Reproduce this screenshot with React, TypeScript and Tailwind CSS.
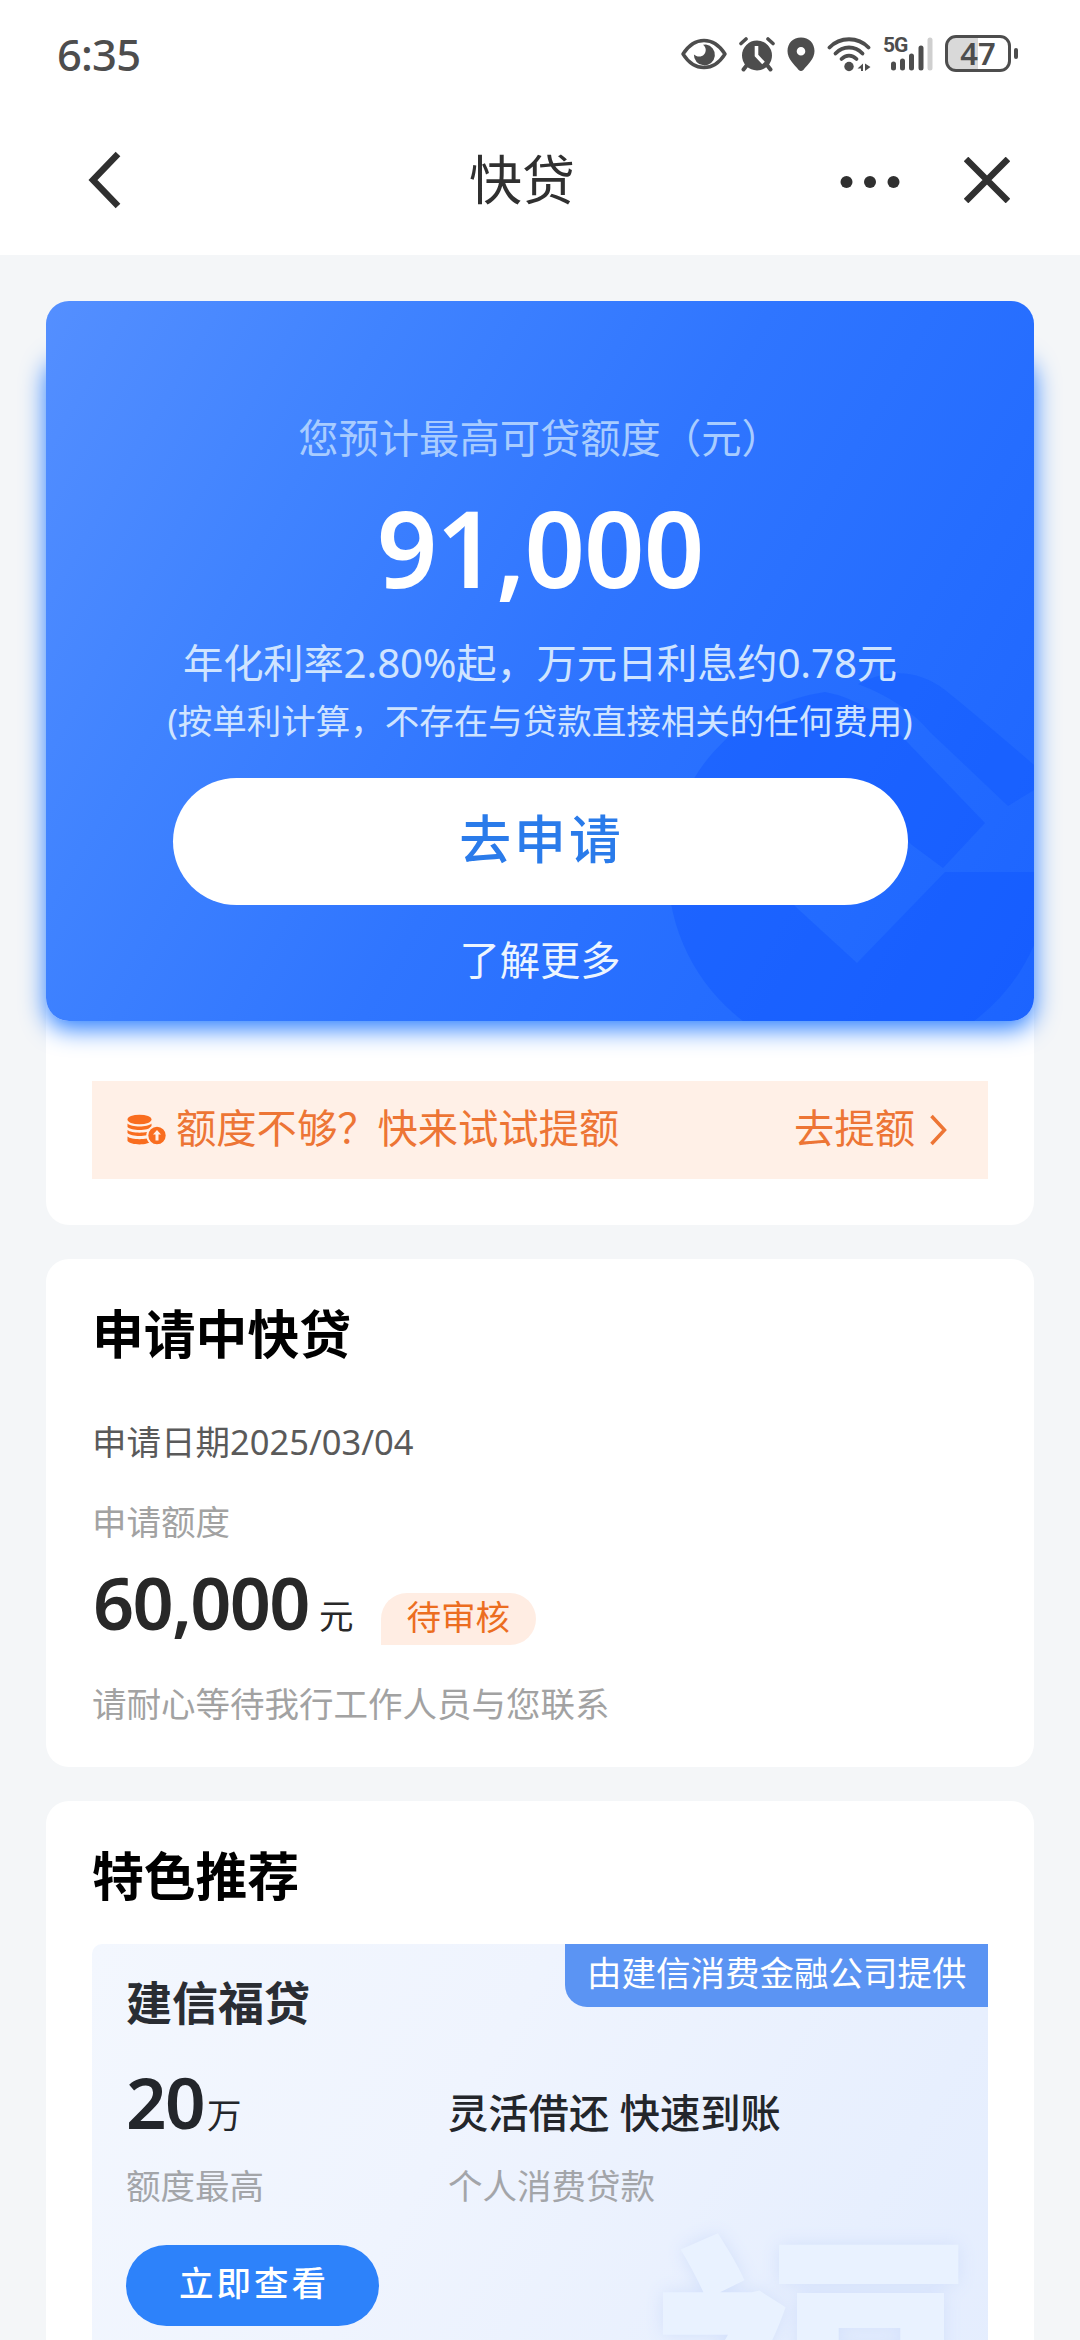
import type { ReactNode } from 'react'

function StatusIcons() {
  return (
    <div className="flex items-center text-[#4d4d4d]">
      {/* Eye comfort */}
      <svg width="46" height="36" viewBox="0 0 46 36" fill="none">
        <path d="M2 18C8 8.500 15 4.500 23 4.500S38 8.500 44 18C38 27.500 31 31.500 23 31.500S8 27.500 2 18Z" stroke="currentColor" strokeWidth="3.400" strokeLinejoin="round" />
        <path d="M25 8.500A10.500 10.500 0 1 1 12.900 18.500C15.500 21 20.500 21.500 23 18.500C25.500 15.500 25.500 11.500 22 8.700Z" fill="currentColor" />
      </svg>
      {/* Alarm */}
      <svg className="ml-3" width="36" height="36" viewBox="0 0 36 36" fill="none">
        <circle cx="18" cy="19.500" r="15" fill="currentColor" />
        <path d="M2 7.500L7 3M34 7.500L29 3" stroke="currentColor" strokeWidth="3.600" strokeLinecap="round" />
        <path d="M8 29L4.500 33.500M28 29L31.500 33.500" stroke="currentColor" strokeWidth="4" strokeLinecap="round" />
        <path d="M17.500 10V19.500L24.500 27" stroke="#fff" strokeWidth="3.600" />
      </svg>
      {/* Location */}
      <svg className="ml-3" width="28" height="36" viewBox="0 0 28 36">
        <path fillRule="evenodd" d="M14 1.500C6 1.500 .5 7.300 .5 15C.5 23 7 28 11.700 34Q14 36.200 16.300 34C21 28 27.500 23 27.500 15C27.500 7.300 22 1.500 14 1.500ZM14 11A4.300 4.300 0 1 1 14 19.600A4.300 4.300 0 1 1 14 11Z" fill="currentColor" />
      </svg>
      {/* Wifi */}
      <svg className="ml-3" width="46" height="36" viewBox="0 0 46 36" fill="none">
        <path d="M2.500 11.500C13 .5 31 .5 41.500 11.500" stroke="currentColor" strokeWidth="3.800" strokeLinecap="round" />
        <path d="M8.500 17.500C16 9.500 28 9.500 35.500 17.500" stroke="currentColor" strokeWidth="3.800" strokeLinecap="round" />
        <path d="M14.500 23C19 18.500 25 18.500 29.500 23" stroke="currentColor" strokeWidth="3.800" strokeLinecap="round" />
        <circle cx="22" cy="30.500" r="4.700" fill="currentColor" />
        <path d="M36 27.500V35H34V32.500H30.500ZM38 27.500L43.500 31L38 35Z" fill="currentColor" />
      </svg>
      {/* Signal */}
      <div className="relative ml-2.5 h-9 w-[51px]">
        <span className="absolute -top-[1px] left-0 font-['Roboto'] text-[21px] leading-[21px] font-bold tracking-[-1px]">5G</span>
        <svg className="absolute inset-0" width="51" height="36" viewBox="0 0 51 36" strokeWidth="5" strokeLinecap="round">
          <path d="M10.500 28V32M19.500 25V32M28.500 20V32M38 12V32" stroke="currentColor" />
          <path d="M47 4V32" stroke="#cfcfcf" />
        </svg>
      </div>
      {/* Battery */}
      <div className="ml-[11px] flex h-[37px] w-[66px] items-center justify-center rounded-[11px] border-[3px] border-[#4d4d4d] bg-[linear-gradient(90deg,#d9d9d9_50%,#fff_50%)] font-['Noto_Sans'] text-[31px] leading-[31px] font-semibold">
        47
      </div>
      <div className="ml-[3px] h-[11px] w-1 rounded-full bg-[#4d4d4d]" />
    </div>
  )
}

function CoinsIcon() {
  return (
    <svg width="40" height="32" viewBox="0 0 40 32" fill="none">
      <ellipse cx="12.500" cy="5.500" rx="12" ry="4.800" fill="#f96d1f" />
      <path d="M.5 9.500C4 13.500 21 13.500 24.500 9.500V13C21 17 4 17 .5 13Z" fill="#f96d1f" />
      <path d="M.5 16C4 19.500 21 19.500 24.500 16V19C21 23 4 23 .5 19Z" fill="#f96d1f" />
      <path d="M.5 22.500C4 26 21 26 24.500 22.500V27C21 31.500 4 31.500 .5 27Z" fill="#f96d1f" />
      <circle cx="30" cy="21.500" r="9.700" fill="#f96d1f" stroke="#fff0e7" strokeWidth="2" />
      <path d="M30 16L34 20.500H31.500V26.500H28.500V20.500H26Z" fill="#fff0e7" />
    </svg>
  )
}

function Emblem() {
  return (
    <svg className="absolute right-0 bottom-0" width="380" height="360" viewBox="654 661 380 360" fill="#0850ff">
      <path d="M825 692A182 182 0 0 0 668 870A190 190 0 0 0 743 1021H974A190 190 0 0 0 1034 945V872H945L857 963L797 908L760 870L860 800L912 845L943 868L985 823L910 745Q870 700 825 692Z" opacity=".33" />
      <path d="M858 684Q905 660 945 690Q975 714 1034 765V790L1008 806L930 732Q905 702 858 684Z" opacity=".28" />
    </svg>
  )
}

function Title({ children }: { children: ReactNode }) {
  return <h2 className="text-[51.8px] leading-[60px] font-bold text-black">{children}</h2>
}

export default function App() {
  return (
    <div className="flex h-[2340px] w-[1080px] flex-col overflow-hidden bg-[#f4f6f8] font-['Noto_Sans','Noto_Sans_CJK_SC',sans-serif]">
      <header className="h-[255px] shrink-0 bg-white">
        <div className="flex h-[107px] items-center justify-between pr-[62px] pl-[57px]">
          <span className="text-[43.5px] leading-[44px] font-medium tracking-[-0.8px] text-[#4d4d4d]">6:35</span>
          <StatusIcons />
        </div>
        <div className="grid h-[146px] grid-cols-[469px_104px_1fr] items-center">
          <svg className="ml-[88px]" width="34" height="58" viewBox="0 0 34 58" fill="none">
            <path d="M30 3L5 29L30 55" stroke="#303030" strokeWidth="6.500" />
          </svg>
          <h1 className="text-[53px] leading-[60px] whitespace-nowrap text-[#303030]">快贷</h1>
          <div className="flex items-center justify-end pr-[70px]">
            <svg width="60" height="18" viewBox="0 0 60 18" fill="#303030">
              <circle cx="6.500" cy="11" r="6" />
              <circle cx="30" cy="11" r="6" />
              <circle cx="53.500" cy="11" r="6" />
            </svg>
            <svg className="ml-16" width="46" height="46" viewBox="0 0 46 46" fill="none">
              <path d="M2 2L44 44M44 2L2 44" stroke="#303030" strokeWidth="6.500" />
            </svg>
          </div>
        </div>
      </header>

      <main className="flex flex-col px-[46px] pt-[46px]">
        {/* Credit limit */}
        <section className="h-[924px] rounded-[23px] bg-[linear-gradient(#f4f6f8_60px,#fff_60px)]">
          <div className="relative h-[720px]">
            <div className="absolute inset-x-0 top-[50px] bottom-0 rounded-[23px] shadow-[0_8px_25px_#2b7fff]" />
            <div className="relative flex h-full flex-col items-center overflow-hidden rounded-[23px] bg-[linear-gradient(120deg,#548fff_0%,#4083ff_25%,#2f75ff_52%,#256dff_75%,#1c64ff_100%)]">
              <Emblem />
              <div className="relative mt-[116px] text-[40.3px] leading-[42px] text-[#a8ccff]">您预计最高可贷额度（元）</div>
              <div className="relative mt-[28px] text-[106px] leading-[120px] font-semibold tracking-[-1px] text-white">91,000</div>
              <div className="relative mt-[34px] text-[40.3px] leading-[44px] tracking-[-0.15px] whitespace-nowrap text-[#cfe4ff]">
                年化利率2.80%起，万元日利息约0.78元
              </div>
              <div className="relative mt-[16px] text-[34.5px] leading-[40px] whitespace-nowrap text-[#cfe4ff]">
                (按单利计算，不存在与贷款直接相关的任何费用)
              </div>
              <button className="relative mt-[37px] h-[127px] w-[735px] shrink-0 rounded-full bg-white pb-1.5 pl-[3px] text-[51.8px] leading-[60px] font-medium tracking-[3px] text-[#2a7bea]">
                去申请
              </button>
              <div className="relative mt-[33px] text-[40.3px] leading-[44px] text-[#edf5ff]">了解更多</div>
            </div>
          </div>
          <div className="mx-[46px] mt-[60px] flex h-[98px] items-center bg-[#fff0e7] pr-[41px] pl-[35px] text-[40.3px] leading-[44px] text-[#ed7535]">
            <CoinsIcon />
            <span className="ml-[9px] -mt-1">额度不够？快来试试提额</span>
            <span className="-mt-1 ml-auto">去提额</span>
            <svg className="ml-[14px]" width="18" height="32" viewBox="0 0 18 32" fill="none">
              <path d="M2.500 2L15.500 16L2.500 30" stroke="#ed7535" strokeWidth="3.500" />
            </svg>
          </div>
        </section>

        {/* Pending application */}
        <section className="mt-[34px] h-[508px] rounded-[23px] bg-white px-[46px] pt-[45px] text-[34.5px] leading-[40px] text-[#a2a2a2]">
          <Title>申请中快贷</Title>
          <div className="mt-[58px] text-[#5a5a5a]">申请日期2025/03/04</div>
          <div className="mt-[40px]">申请额度</div>
          <div className="mt-[20px] flex h-[82px] text-[#282828]">
            <span className="ml-[1px] w-[217px] text-[72px] leading-[80px] font-semibold tracking-[-1.7px]">60,000</span>
            <span className="mt-[34px] ml-[9px]">元</span>
            <span className="mt-[31px] ml-[27px] h-[52px] rounded-[26px] rounded-bl-none bg-[#ffede3] px-[26px] leading-[47px] text-[#ec6d20]">
              待审核
            </span>
          </div>
          <div className="mt-[40px]">请耐心等待我行工作人员与您联系</div>
        </section>

        {/* Recommendations */}
        <section className="mt-[34px] h-[600px] rounded-t-[23px] bg-white px-[46px] pt-[45px]">
          <Title>特色推荐</Title>
          <div className="relative mt-[38px] h-[460px] overflow-hidden rounded-tl-[10px] bg-[linear-gradient(120deg,#f3f7fe_0%,#eff4fe_40%,#e7effe_80%,#e4edfe_100%)] text-[34.5px] leading-[40px]">
            <div className="absolute top-[280px] right-[14px] text-[326px] leading-[322px] font-black text-[#e9f2ff] [text-shadow:0_0_18px_#d3e0fb]">
              福
            </div>
            <div className="absolute top-0 right-0 h-[63px] w-[423px] rounded-bl-[22px] bg-[#5b94f3] pl-[22px] leading-[58px] whitespace-nowrap text-white">
              由建信消费金融公司提供
            </div>
            <div className="relative px-[34px] pt-[33px]">
              <h3 className="text-[46px] leading-[50px] font-bold text-[#2a2d33]">建信福贷</h3>
              <div className="mt-[35px] grid grid-cols-[322px_1fr] text-[#23262b]">
                <div className="flex h-[80px]">
                  <span className="w-[80px] text-[71px] leading-[80px] font-semibold tracking-[-1.5px]">20</span>
                  <span className="mt-[33px] ml-[1px]">万</span>
                </div>
                <div className="mt-[31px] text-[40.3px] leading-[40px] font-medium">灵活借还 快速到账</div>
                <div className="mt-[24px] text-[#a3a5a9]">额度最高</div>
                <div className="mt-[24px] text-[#a3a5a9]">个人消费贷款</div>
              </div>
              <button className="mt-[39px] block h-[81px] w-[253px] rounded-full bg-[#2d82fa] pb-1.5 pl-[3px] font-medium tracking-[3px] text-white">
                立即查看
              </button>
            </div>
          </div>
        </section>
      </main>
    </div>
  )
}
